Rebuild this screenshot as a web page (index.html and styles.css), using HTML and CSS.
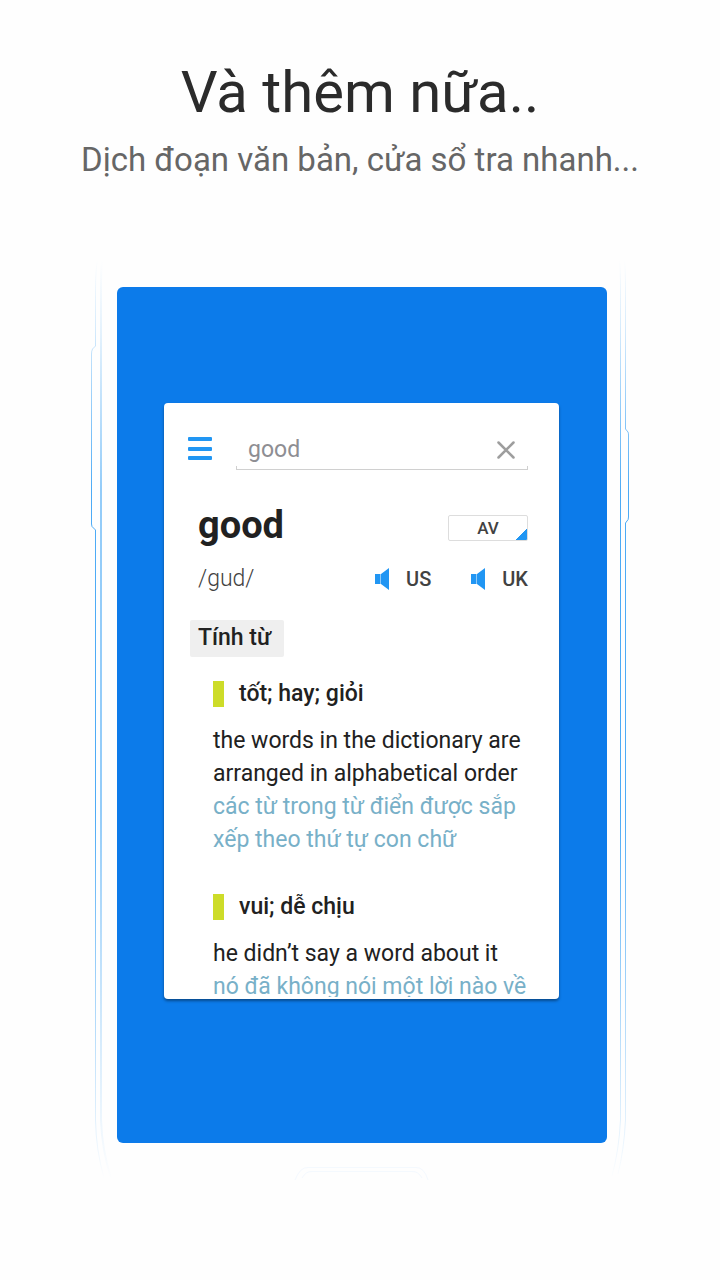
FILE: index.html
```html
<!DOCTYPE html>
<html lang="vi">
<head>
<meta charset="utf-8">
<meta name="viewport" content="width=device-width, initial-scale=1">
<title>Và thêm nữa..</title>
<link rel="stylesheet" href="styles.css">
</head>
<body>
<header class="intro">
  <h1 class="intro-title">Và thêm nữa..</h1>
  <p class="intro-text">Dịch đoạn văn bản, cửa sổ tra nhanh...</p>
</header>
<main class="phone">
  <svg class="edge" viewBox="0 0 26 920" preserveAspectRatio="none" fill="none" aria-hidden="true">
    <defs>
      <linearGradient id="fade" gradientUnits="userSpaceOnUse" x1="0" y1="0" x2="0" y2="920">
        <stop offset="0" stop-color="#2196f3" stop-opacity="0"/>
        <stop offset=".08" stop-color="#2196f3" stop-opacity=".2"/>
        <stop offset=".25" stop-color="#2196f3" stop-opacity=".8"/>
        <stop offset=".6" stop-color="#2196f3" stop-opacity=".8"/>
        <stop offset=".85" stop-color="#2196f3" stop-opacity=".3"/>
        <stop offset="1" stop-color="#2196f3" stop-opacity="0"/>
      </linearGradient>
    </defs>
    <path stroke="url(#fade)" d="M6.500 0Q4.500 10 4.500 30V86L1.500 89Q.5 91 .5 94V264Q.5 267 2.500 268L4.500 270V860Q5 890 13 918"/>
    <path stroke="url(#fade)" stroke-width="2" stroke-opacity=".6" d="M11 0Q10 10 10 30V860Q11 890 20 918"/>
  </svg>
  <section class="screen">
    <article class="card">
      <form class="search">
        <button class="icon-button" type="button" aria-label="Menu">
          <svg width="24" height="24" viewBox="0 0 24 24" aria-hidden="true"><g fill="#2196f3"><rect y="0" width="24" height="4" rx="1"/><rect y="10" width="24" height="4" rx="1"/><rect y="19" width="24" height="4" rx="1"/></g></svg>
        </button>
        <div class="field">
          <input class="field-input" type="text" value="good" aria-label="Từ cần tra">
          <button class="icon-button" type="button" aria-label="Xóa">
            <svg width="18" height="18" viewBox="0 0 18 18" aria-hidden="true"><path d="M1.500 1.500l15 15M16.500 1.500l-15 15" stroke="#9e9e9e" stroke-width="2.500" stroke-linecap="round"/></svg>
          </button>
        </div>
      </form>
      <div class="row">
        <h2 class="word">good</h2>
        <button class="dictionary" type="button">AV</button>
      </div>
      <div class="row">
        <span class="phonetic">/gud/</span>
        <div class="voices">
          <button class="voice" type="button"><svg width="15" height="22" viewBox="0 0 15 22" aria-hidden="true"><path fill="#2196f3" d="M0 6h5v10H0zM6 6l8-6v22l-8-6z"/><path fill="#90caf9" d="M5 6h1v10H5z"/></svg>US</button>
          <button class="voice" type="button"><svg width="15" height="22" viewBox="0 0 15 22" aria-hidden="true"><path fill="#2196f3" d="M0 6h5v10H0zM6 6l8-6v22l-8-6z"/><path fill="#90caf9" d="M5 6h1v10H5z"/></svg>UK</button>
        </div>
      </div>
      <div class="entry">
        <h3 class="part">Tính từ</h3>
        <section class="sense">
          <h4 class="meaning">tốt; hay; giỏi</h4>
          <p class="example">the words in the dictionary are arranged in alphabetical order</p>
          <p class="example translation">các từ trong từ điển được sắp xếp theo thứ tự con chữ</p>
        </section>
        <section class="sense">
          <h4 class="meaning">vui; dễ chịu</h4>
          <p class="example">he didn’t say a word about it</p>
          <p class="example translation">nó đã không nói một lời nào về</p>
        </section>
      </div>
    </article>
  </section>
  <svg class="edge" viewBox="0 0 22 920" preserveAspectRatio="none" fill="none" aria-hidden="true">
    <path stroke="url(#fade)" d="M12.500 0Q13.500 10 13.500 30V860Q12 890 5 916"/>
    <path stroke="url(#fade)" d="M17.500 0Q18.500 10 18.500 30V169L21 172Q21.500 173 21.500 175V257Q21.500 260 20 261L18.500 263V860Q17 890 11 914"/>
  </svg>
  <svg class="home" width="136" height="16" viewBox="0 0 136 16" fill="none" stroke="#f4f9fe" aria-hidden="true">
    <path d="M1 14Q6 1 14 1.500H122Q130 1 134 14M8 12Q12 5 18 5.500H118Q124 5 128 12"/>
  </svg>
</main>
</body>
</html>
```
FILE: styles.css
```css
* {
  box-sizing: border-box;
}

body {
  margin: 0;
  background: #fefefe;
  color: #212121;
  font-family: Roboto, "Liberation Sans", sans-serif;
}

h1, h2, h3, h4, p {
  margin: 0;
  font-weight: 400;
}

button {
  padding: 0;
  border: 0;
  background: none;
  color: #424242;
  font-family: inherit;
  font-weight: 500;
}

svg {
  display: block;
}

.intro {
  padding: 56px 16px 0;
  text-align: center;
}

.intro-title {
  color: #2b2b2b;
  font-size: 58px;
  line-height: 72px;
}

.intro-text {
  padding-top: 12px;
  color: #666;
  font-size: 33px;
  line-height: 40px;
}

.phone {
  display: grid;
  grid-template-columns: 26px minmax(0, 1fr) 22px;
  margin: 80px 91px 0;
}

.edge {
  width: 100%;
  height: 100%;
}

.screen {
  margin: 27px 0 37px;
  padding: 116px 48px 144px 47px;
  border-radius: 6px;
  background: #0c7bea;
}

.home {
  grid-column: 2;
  justify-self: center;
  margin-top: -14px;
}

.card {
  height: 596px;
  padding: 25px 31px 2px 24px;
  border-radius: 4px;
  background: #fff;
  box-shadow: 0 2px 3px rgba(0, 0, 0, 0.4);
  display: flex;
  flex-direction: column;
}

.search {
  display: grid;
  grid-template-columns: 24px minmax(0, 1fr);
  align-items: center;
  gap: 24px;
}

.icon-button {
  display: flex;
}

.field {
  position: relative;
  display: flex;
  align-items: center;
  height: 42px;
  padding: 2px 13px 0 12px;
  border-bottom: 1px solid #d0d0d0;
}

.field::before {
  position: absolute;
  inset: auto 0 0;
  height: 3px;
  border: solid #d0d0d0;
  border-width: 0 1px;
  content: "";
}

.field-input {
  flex: 1;
  min-width: 0;
  padding: 0;
  border: 0;
  outline: 0;
  background: none;
  color: #8e8e93;
  font: 23px/32px Roboto, sans-serif;
}

.row {
  display: flex;
  align-items: center;
  justify-content: space-between;
  padding-left: 10px;
}

.word {
  padding: 32px 0 17px;
  font-size: 38px;
  font-weight: 700;
  line-height: 46px;
}

.dictionary {
  width: 80px;
  height: 26px;
  margin-top: 20px;
  border: 1px solid #ddd;
  border-radius: 2px;
  background: linear-gradient(135deg, transparent 50%, #2196f3 50%) right bottom / 11px 11px no-repeat;
  font-size: 17px;
}

.phonetic {
  color: #424242;
  font-size: 23px;
  font-weight: 300;
  line-height: 28px;
}

.voices {
  display: flex;
  gap: 40px;
}

.voice {
  display: flex;
  align-items: center;
  gap: 16px;
  font-size: 20px;
}

.entry {
  flex: 1;
  min-height: 0;
  margin-right: -8px;
  padding-top: 27px;
  overflow: hidden;
}

.part {
  width: fit-content;
  margin-left: 2px;
  padding: 2px 13px 3px 8px;
  border-radius: 2px;
  background: #efefef;
  font-size: 23px;
  font-weight: 500;
  line-height: 32px;
}

.sense {
  padding: 24px 0 14px 25px;
}

.meaning {
  margin-bottom: 17px;
  padding-left: 15px;
  border-left: 11px solid #cddc29;
  font-size: 23px;
  font-weight: 500;
  line-height: 26px;
}

.example {
  font-size: 23px;
  line-height: 33px;
}

.translation {
  color: #78b0c8;
}
```
